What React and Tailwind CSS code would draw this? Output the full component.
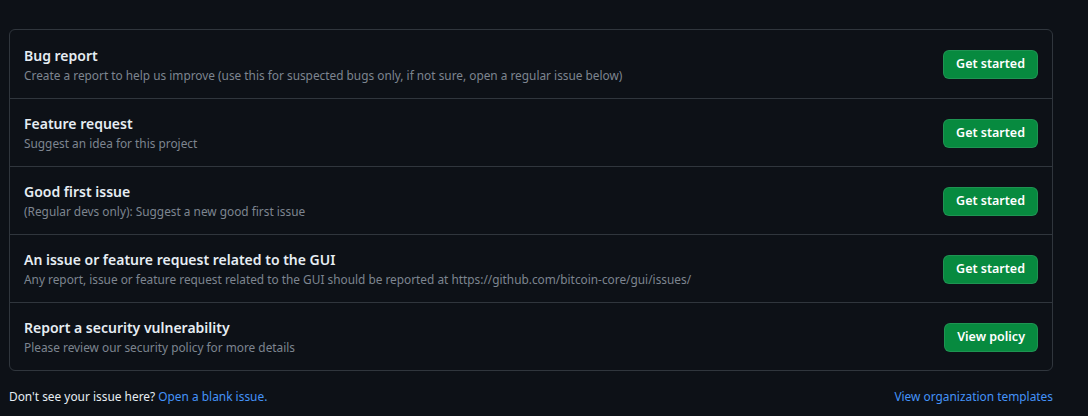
const rows = [
  {
    title: "Bug report",
    desc: "Create a report to help us improve (use this for suspected bugs only, if not sure, open a regular issue below)",
    action: "Get started",
  },
  {
    title: "Feature request",
    desc: "Suggest an idea for this project",
    action: "Get started",
  },
  {
    title: "Good first issue",
    desc: "(Regular devs only): Suggest a new good first issue",
    action: "Get started",
  },
  {
    title: "An issue or feature request related to the GUI",
    desc: "Any report, issue or feature request related to the GUI should be reported at https://github.com/bitcoin-core/gui/issues/",
    action: "Get started",
  },
  {
    title: "Report a security vulnerability",
    desc: "Please review our security policy for more details",
    action: "View policy",
  },
];

const App = () => {
  return (
    <div className="min-h-[416px] bg-[#0d1117] pt-[29px] font-['Noto_Sans',sans-serif]">
      <div className="ml-[9px] w-[1044px]">
        <div className="rounded-md border border-[#30363d]">
          {rows.map((row, i) => (
            <div
              key={row.title}
              className={
                "flex h-[68px] items-center justify-between pl-[14px] pr-[14px] " +
                (i > 0 ? "border-t border-[#30363d]" : "")
              }
            >
              <div className="flex flex-col pt-[2px]">
                <div className="text-[14px] font-semibold leading-[20px] text-[#e6edf3]">
                  {row.title}
                </div>
                <div className="text-[11.85px] leading-[19px] text-[#7d8590]">{row.desc}</div>
              </div>
              <button className="mt-[1px] h-[29px] rounded-md border border-[rgba(240,246,252,0.1)] bg-[#078a3f] px-[12px] text-[12.5px] font-semibold text-white">
                {row.action}
              </button>
            </div>
          ))}
        </div>
        <div className="mt-[16px] flex items-center justify-between text-[11.9px] leading-[18px]">
          <div className="text-[#e6edf3]">
            Don't see your issue here? <a className="text-[#4493f8]">Open a blank issue.</a>
          </div>
          <a className="text-[#4493f8]">View organization templates</a>
        </div>
      </div>
    </div>
  );
};

export default App;
